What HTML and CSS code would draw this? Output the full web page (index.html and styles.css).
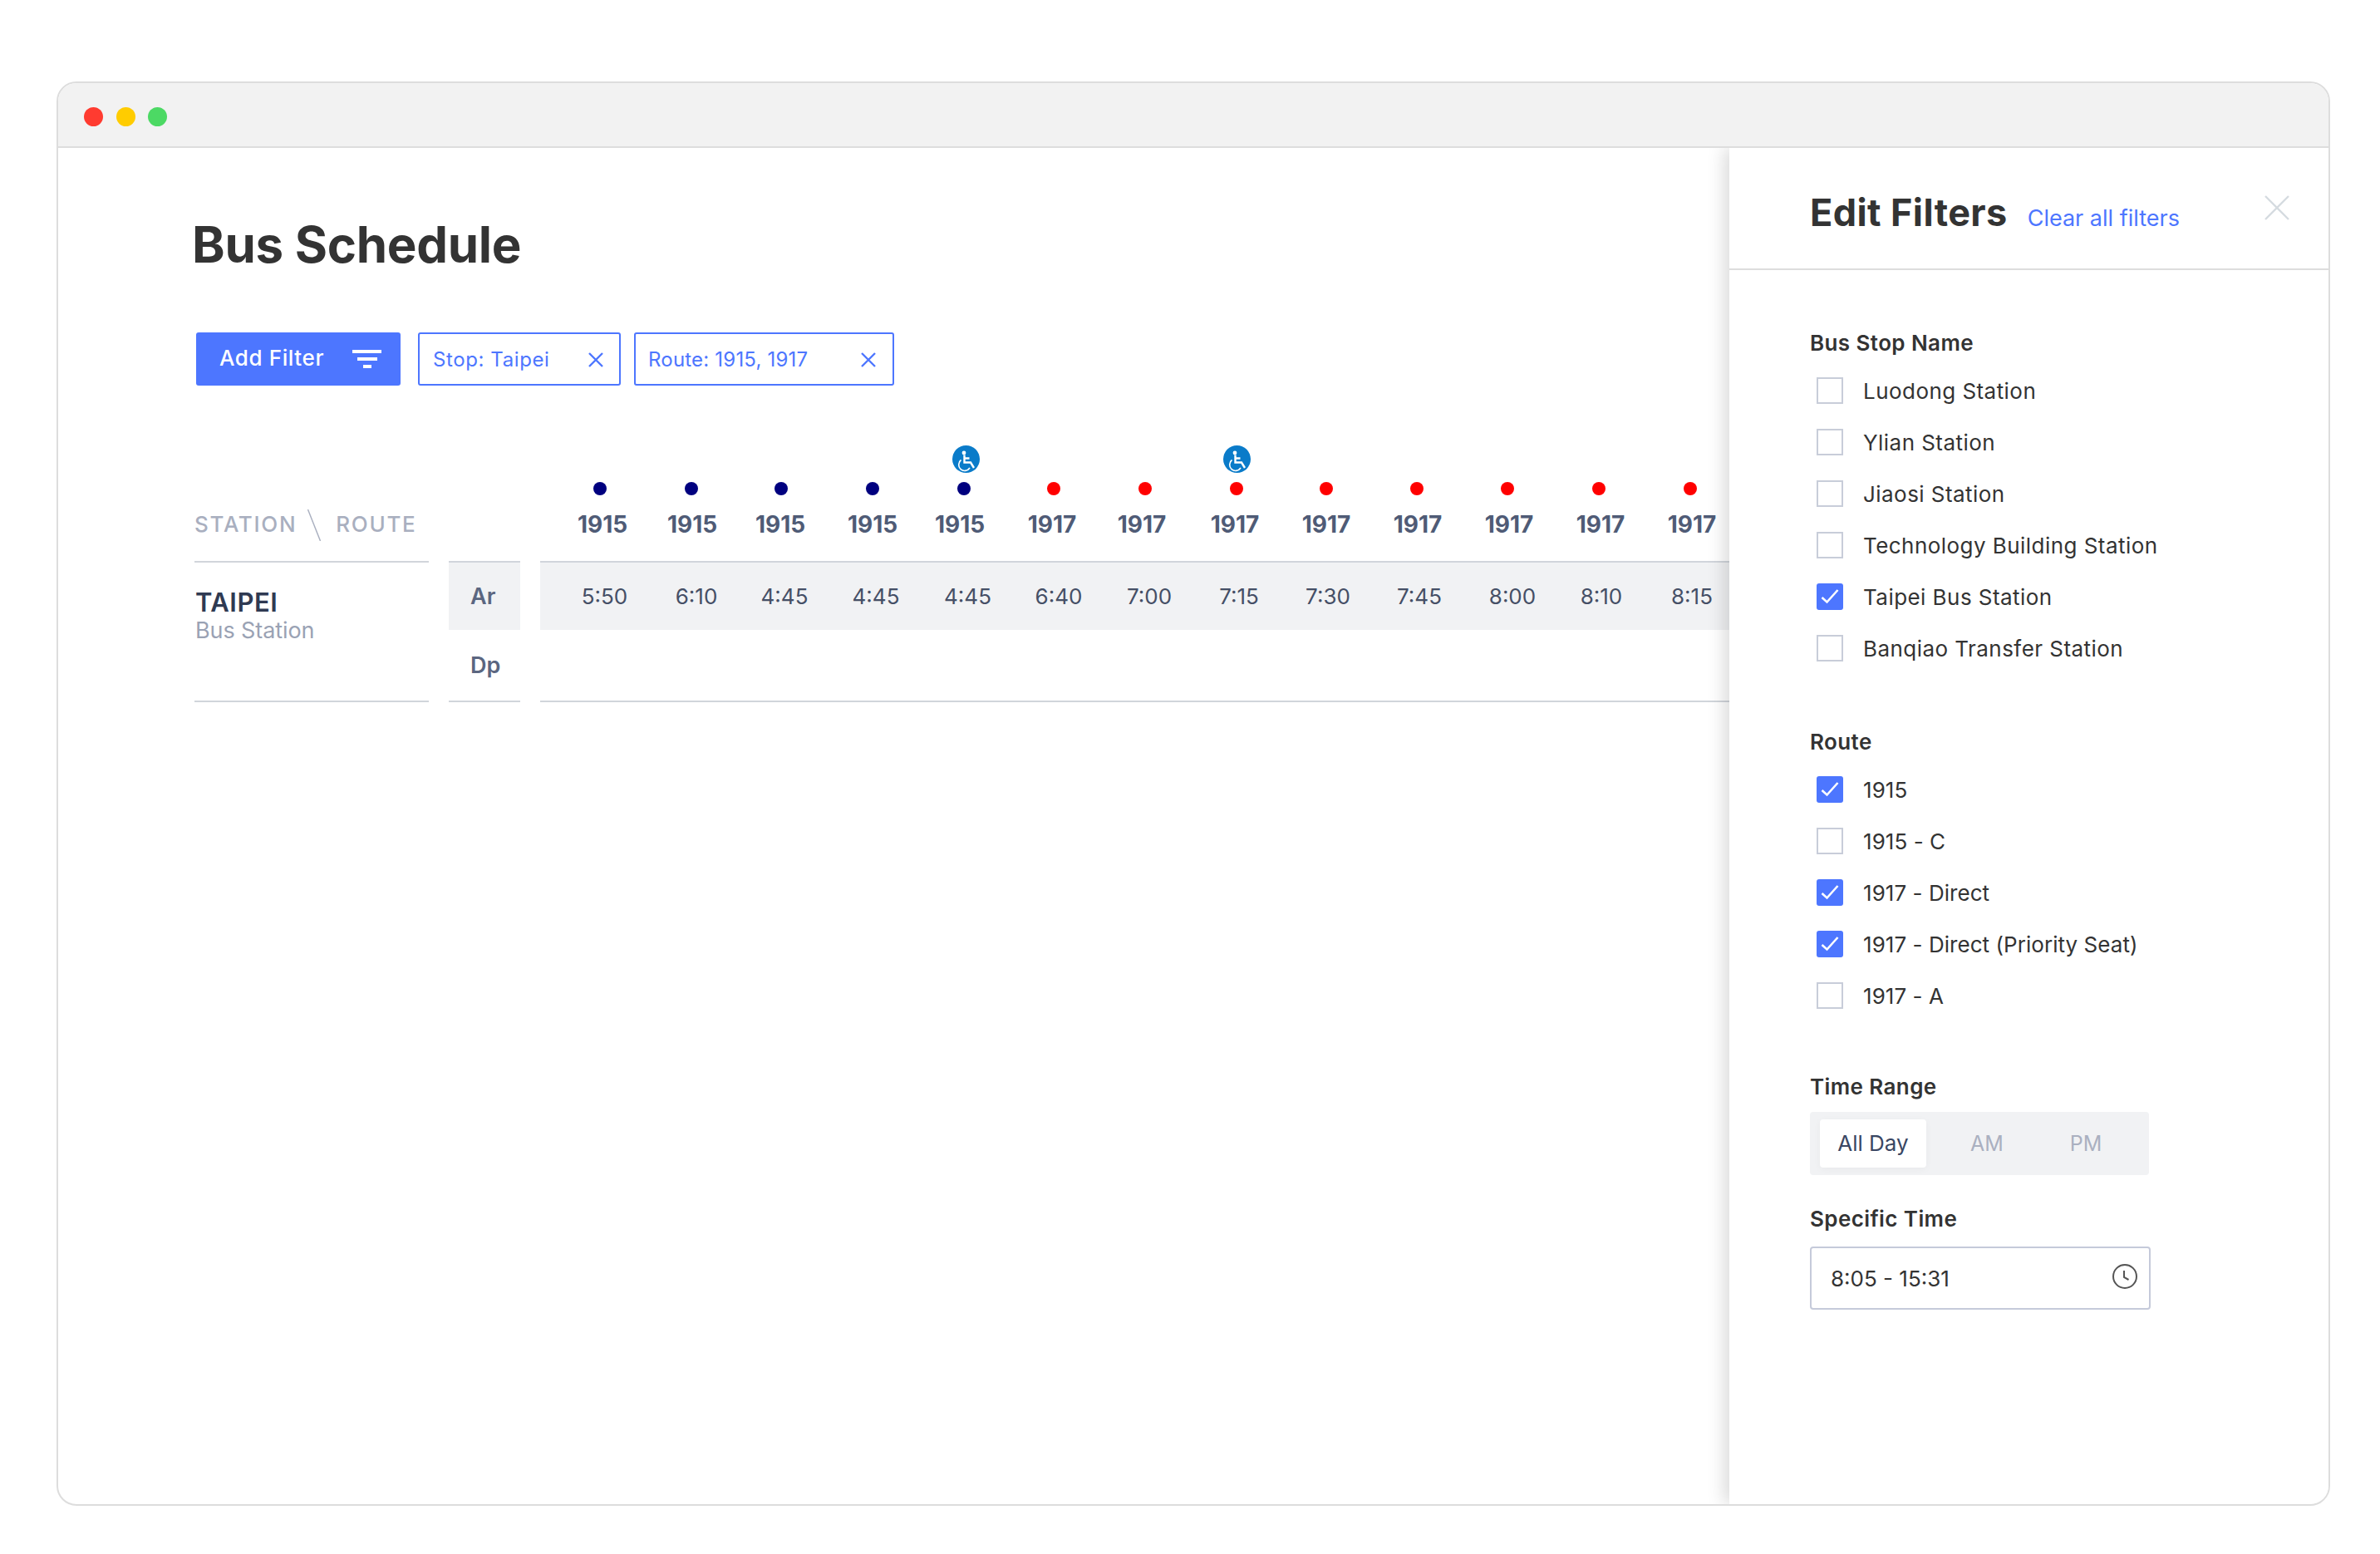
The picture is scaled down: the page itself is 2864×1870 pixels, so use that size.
FILE: index.html
```html
<!DOCTYPE html>
<html lang="en">
<head>
  <meta charset="UTF-8" />
  <title>Bus Schedule</title>
  <link rel="stylesheet" href="styles.css">
</head>
<body>
  <div class="window">
    <div class="titlebar">
      <span class="light red"></span>
      <span class="light yellow"></span>
      <span class="light green"></span>
    </div>
    <div class="content">
      <main class="main">
        <h1>Bus Schedule</h1>

        <div class="toolbar">
          <button class="add-filter" type="button">
            Add Filter
            <span class="filter-icon"><i></i><i></i><i></i></span>
          </button>
          <div class="chip chip-stop">
            <span>Stop: Taipei</span>
            <svg class="chip-x" viewBox="0 0 18 18"><path d="M1 1l16 16M17 1L1 17"/></svg>
          </div>
          <div class="chip chip-route">
            <span>Route: 1915, 1917</span>
            <svg class="chip-x" viewBox="0 0 18 18"><path d="M1 1l16 16M17 1L1 17"/></svg>
          </div>
        </div>

        <div class="schedule">
          <div class="dots">
            <div class="dot-cell"><span class="dot navy"></span></div>
            <div class="dot-cell"><span class="dot navy"></span></div>
            <div class="dot-cell"><span class="dot navy"></span></div>
            <div class="dot-cell"><span class="dot navy"></span></div>
            <div class="dot-cell">
              <svg class="access access-shift" viewBox="0 0 33 33"><circle class="access-bg" cx="16.5" cy="16.5" r="16.5"/><circle class="access-head" cx="14" cy="9" r="2.4"/><path class="access-body" d="M14.5 11.5v9h7.5l4 6.5M14.5 15.5h6"/><path class="access-wheel" d="M10.5 17.5a7.2 7.2 0 1 0 10.5 9.5"/></svg>
              <span class="dot navy"></span>
            </div>
            <div class="dot-cell"><span class="dot red"></span></div>
            <div class="dot-cell"><span class="dot red"></span></div>
            <div class="dot-cell">
              <svg class="access" viewBox="0 0 33 33"><circle class="access-bg" cx="16.5" cy="16.5" r="16.5"/><circle class="access-head" cx="14" cy="9" r="2.4"/><path class="access-body" d="M14.5 11.5v9h7.5l4 6.5M14.5 15.5h6"/><path class="access-wheel" d="M10.5 17.5a7.2 7.2 0 1 0 10.5 9.5"/></svg>
              <span class="dot red"></span>
            </div>
            <div class="dot-cell"><span class="dot red"></span></div>
            <div class="dot-cell"><span class="dot red"></span></div>
            <div class="dot-cell"><span class="dot red"></span></div>
            <div class="dot-cell"><span class="dot red"></span></div>
            <div class="dot-cell"><span class="dot red"></span></div>
          </div>

          <div class="head-row">
            <div class="head-station">
              <span>STATION</span>
              <svg class="slash" viewBox="0 0 16 38"><path d="M0.5 0l15 38"/></svg>
              <span>ROUTE</span>
            </div>
            <div class="routes">
              <span>1915</span><span>1915</span><span>1915</span><span>1915</span><span>1915</span>
              <span>1917</span><span>1917</span><span>1917</span><span>1917</span><span>1917</span>
              <span>1917</span><span>1917</span><span>1917</span>
            </div>
          </div>

          <div class="body-row">
            <div class="station">
              <div class="station-name">TAIPEI</div>
              <div class="station-type">Bus Station</div>
            </div>
            <div class="ar-dp">
              <div class="ar">Ar</div>
              <div class="dp">Dp</div>
            </div>
            <div class="times-wrap">
              <div class="times">
                <span>5:50</span><span>6:10</span><span>4:45</span><span>4:45</span><span>4:45</span>
                <span>6:40</span><span>7:00</span><span>7:15</span><span>7:30</span><span>7:45</span>
                <span>8:00</span><span>8:10</span><span>8:15</span>
              </div>
            </div>
          </div>
        </div>
      </main>

      <aside class="panel">
        <div class="panel-head">
          <h2>Edit Filters</h2>
          <a class="clear-all">Clear all filters</a>
          <svg class="panel-close" viewBox="0 0 30 30"><path d="M1 1l28 28M29 1L1 29"/></svg>
        </div>

        <div class="panel-body">
          <section class="group">
            <h3>Bus Stop Name</h3>
            <label class="check"><span class="box"></span>Luodong Station</label>
            <label class="check"><span class="box"></span>Ylian Station</label>
            <label class="check"><span class="box"></span>Jiaosi Station</label>
            <label class="check"><span class="box"></span>Technology Building Station</label>
            <label class="check"><span class="box on"><svg viewBox="0 0 32 32"><path d="M6.5 17l6 5.5L25.5 8"/></svg></span>Taipei Bus Station</label>
            <label class="check"><span class="box"></span>Banqiao Transfer Station</label>
          </section>

          <section class="group group-route">
            <h3>Route</h3>
            <label class="check"><span class="box on"><svg viewBox="0 0 32 32"><path d="M6.5 17l6 5.5L25.5 8"/></svg></span>1915</label>
            <label class="check"><span class="box"></span>1915 - C</label>
            <label class="check"><span class="box on"><svg viewBox="0 0 32 32"><path d="M6.5 17l6 5.5L25.5 8"/></svg></span>1917 - Direct</label>
            <label class="check"><span class="box on"><svg viewBox="0 0 32 32"><path d="M6.5 17l6 5.5L25.5 8"/></svg></span>1917 - Direct (Priority Seat)</label>
            <label class="check"><span class="box"></span>1917 - A</label>
          </section>

          <section class="group group-time">
            <h3>Time Range</h3>
            <div class="segments">
              <span class="segment active">All Day</span>
              <span class="segment seg-am">AM</span>
              <span class="segment seg-pm">PM</span>
            </div>
          </section>

          <section class="group group-specific">
            <h3>Specific Time</h3>
            <div class="time-input">
              <span>8:05 - 15:31</span>
              <svg class="clock" viewBox="0 0 30 30"><circle cx="15" cy="15" r="14"/><path d="M14 8v8l5.5 3"/></svg>
            </div>
          </section>
        </div>
      </aside>
    </div>
  </div>
</body>
</html>
```

FILE: styles.css
```css
* {
  box-sizing: border-box;
}
html, body {
  margin: 0;
  background: #fff;
}
body {
  font-family: Inter, "Noto Sans", sans-serif;
  color: #333;
  padding: 98px 0 0 68px;
}
h1, h2, h3 {
  margin: 0;
}

/* window frame */
.window {
  width: 2736px;
  height: 1714px;
  border: 2px solid #ddd;
  border-radius: 24px;
  overflow: hidden;
  display: flex;
  flex-direction: column;
}
.titlebar {
  height: 78px;
  flex: none;
  background: #f2f2f2;
  border-bottom: 2px solid #ddd;
  display: flex;
  align-items: center;
  gap: 15.5px;
  padding: 5px 0 0 31px;
  position: relative;
  z-index: 2;
}
.light {
  width: 23px;
  height: 23px;
  border-radius: 50%;
}
.light.red { background: #ff3b30; }
.light.yellow { background: #ffcc00; }
.light.green { background: #4cd964; }

.content {
  flex: 1;
  display: flex;
  min-height: 0;
}

/* main column */
.main {
  flex: 1;
  min-width: 0;
  overflow: hidden;
  padding: 78px 0 0 161px;
}
h1 {
  font-size: 60px;
  line-height: 76px;
  font-weight: 700;
  color: #333;
  letter-spacing: -0.3px;
}
.toolbar {
  display: flex;
  margin: 68px 0 0 5px;
  gap: 21px;
}
.add-filter {
  width: 246px;
  height: 64px;
  border: 0;
  border-radius: 3px;
  background: #4d76ff;
  color: #fff;
  font: 500 26px Inter, sans-serif;
  letter-spacing: 0.6px;
  display: flex;
  align-items: center;
  padding: 0 0 4px 28px;
}
.filter-icon {
  margin-left: auto;
  margin-right: 23px;
  width: 35px;
  display: flex;
  flex-direction: column;
  align-items: center;
  gap: 5px;
  margin-top: 4px;
}
.filter-icon i {
  display: block;
  height: 4px;
  width: 35px;
  background: #fff;
}
.filter-icon i:nth-child(2) { width: 24px; }
.filter-icon i:nth-child(3) { width: 10px; }
.chip {
  height: 64px;
  border: 2px solid #4d76ff;
  border-radius: 3px;
  color: #4d76ff;
  font-size: 24px;
  display: flex;
  align-items: center;
  justify-content: space-between;
  padding: 0 20px 0 16px;
}
.chip-stop { width: 244px; letter-spacing: 0.6px; padding-right: 19px; }
.chip-route { width: 313px; margin-left: -5px; letter-spacing: 0.2px; padding-left: 15px; }
.chip-x {
  width: 18px;
  height: 18px;
  margin-top: 2px;
}
.chip-x path {
  stroke: #4d76ff;
  stroke-width: 2.4;
  fill: none;
}

/* schedule table */
.dots {
  display: grid;
  grid-template-columns: 110px 108px 110px 110px 108px 110px 110px 108px 109px 109px 110px 110px 1px;
  align-items: end;
  height: 132px;
  padding-left: 441px;
}
.dot-cell {
  width: 100px;
  display: flex;
  flex-direction: column;
  align-items: center;
}
.dot {
  width: 16px;
  height: 16px;
  border-radius: 50%;
}
.dot.navy { background: #00007f; }
.dot.red { background: #ff0000; }
.access {
  width: 33px;
  height: 33px;
  margin-bottom: 11px;
}
.access-shift {
  margin-left: 4px;
}
.access-bg { fill: #0a7bc9; }
.access-head { fill: #fff; }
.access-body {
  fill: none;
  stroke: #fff;
  stroke-width: 2.4;
}
.access-wheel {
  fill: none;
  stroke: #fff;
  stroke-width: 1.6;
}
.head-row {
  display: flex;
  height: 79px;
  align-items: flex-start;
  padding-top: 16px;
}
.head-station {
  width: 441px;
  flex: none;
  display: flex;
  align-items: center;
  margin-left: 3px;
  height: 36px;
  color: #a9afbf;
  font-size: 26px;
  font-weight: 500;
  letter-spacing: 1.7px;
}
.slash {
  width: 16px;
  height: 38px;
  margin: 4px 18px 0 13px;
}
.slash path {
  stroke: #a9afbf;
  stroke-width: 1.4;
  fill: none;
}
.routes {
  display: grid;
  grid-template-columns: 108px 106px 111px 105px 111px 108px 112px 110px 110px 110px 110px 110px 1px;
  color: #4f5b76;
  font-size: 28px;
  line-height: 38px;
  font-weight: 700;
}
.routes span {
  width: 100px;
  text-align: center;
}
.body-row {
  display: flex;
  align-items: flex-start;
  height: 170px;
}
.station {
  width: 282px;
  height: 170px;
  flex: none;
  margin-left: 3px;
  border-top: 2px solid #d1d5db;
  border-bottom: 2px solid #d1d5db;
  padding: 30px 0 0 1px;
}
.station-name {
  font-size: 31px;
  line-height: 36px;
  font-weight: 600;
  letter-spacing: 0.5px;
  color: #2f3a52;
}
.station-type {
  font-size: 27px;
  line-height: 32px;
  color: #9aa2b4;
  letter-spacing: -0.1px;
}
.ar-dp {
  width: 86px;
  flex: none;
  margin-left: 24px;
  height: 170px;
  border-top: 2px solid #d1d5db;
  border-bottom: 2px solid #d1d5db;
  font-size: 27px;
  font-weight: 600;
  color: #5b6680;
}
.ar, .dp {
  line-height: 82px;
  padding-left: 26px;
}
.ar {
  height: 81px;
  background: #f1f2f4;
}
.dp {
  height: 85px;
  line-height: 85px;
}
.times-wrap {
  flex: 1;
  margin-left: 24px;
  height: 170px;
  border-top: 2px solid #d1d5db;
  border-bottom: 2px solid #d1d5db;
}
.times {
  display: grid;
  grid-template-columns: 110.5px 106px 110px 110.5px 109.5px 109px 108px 107px 110px 112px 107px 109px 1px;
  height: 81px;
  background: #f1f2f4;
  padding-left: 27.5px;
  color: #454f66;
  font-size: 26px;
  line-height: 82px;
}
.times span {
  width: 100px;
  text-align: center;
}

/* filter panel */
.panel {
  width: 721px;
  flex: none;
  background: #fff;
  box-shadow: -6px 0 20px rgba(0, 0, 0, 0.15);
  position: relative;
  z-index: 1;
}
.panel-head {
  height: 147px;
  border-bottom: 2px solid #ddd;
  display: flex;
  align-items: baseline;
  padding: 50px 0 0 97px;
}
h2 {
  font-size: 45px;
  line-height: 56px;
  font-weight: 700;
  letter-spacing: 0.4px;
}
.clear-all {
  color: #4d76ff;
  font-size: 27px;
  margin-left: 24px;
}
.panel-close {
  width: 30px;
  height: 30px;
  margin-left: auto;
  margin-right: 47px;
  align-self: flex-start;
  margin-top: 7px;
}
.panel-close path {
  stroke: #d5dbe0;
  stroke-width: 2.4;
  fill: none;
}
.panel-body {
  padding: 0 0 0 97px;
}
.group {
  display: flex;
  flex-direction: column;
  align-items: flex-start;
}
.group:first-child {
  padding-top: 71px;
}
h3 {
  font-size: 26px;
  line-height: 34px;
  font-weight: 600;
  letter-spacing: 0.4px;
  margin-bottom: 9px;
}
.check {
  height: 62px;
  display: flex;
  align-items: center;
  padding-left: 8px;
  font-size: 26px;
  letter-spacing: 0.45px;
}
.box {
  width: 32px;
  height: 32px;
  border: 2px solid #c8cdd9;
  margin-right: 24px;
  flex: none;
}
.box.on {
  background: #4d76ff;
  border: 0;
  border-radius: 3px;
}
.box svg {
  display: block;
  width: 32px;
  height: 32px;
}
.box path {
  stroke: #fff;
  stroke-width: 2.6;
  fill: none;
}
.group-route {
  margin-top: 65px;
}
.group-route .check {
  letter-spacing: 0.05px;
}
.group-time {
  margin-top: 62px;
}
.group-time h3 {
  margin-bottom: 14px;
}
.segments {
  width: 408px;
  height: 76px;
  margin-top: -1px;
  background: #f1f2f4;
  border-radius: 4px;
  display: flex;
  align-items: center;
  padding-left: 12px;
  font-size: 25px;
  color: #aab0c0;
}
.segment.active {
  width: 128px;
  height: 58px;
  background: #fff;
  border-radius: 4px;
  box-shadow: 0 2px 10px rgba(0, 0, 0, 0.04);
  color: #3a4763;
  font-size: 26px;
  line-height: 58px;
  text-align: center;
}
.seg-am { margin-left: 53px; }
.seg-pm { margin-left: 80px; }
.group-specific {
  margin-top: 36px;
}
.group-specific h3 {
  margin-bottom: 16px;
}
.time-input {
  width: 410px;
  height: 76px;
  border: 2px solid #c5cada;
  border-radius: 4px;
  display: flex;
  align-items: center;
  justify-content: space-between;
  padding: 0 14px 0 23px;
  font-size: 26px;
}
.clock {
  width: 30px;
  height: 30px;
  margin-bottom: 4px;
}
.clock circle,
.clock path {
  stroke: #555;
  stroke-width: 2;
  fill: none;
}
```
